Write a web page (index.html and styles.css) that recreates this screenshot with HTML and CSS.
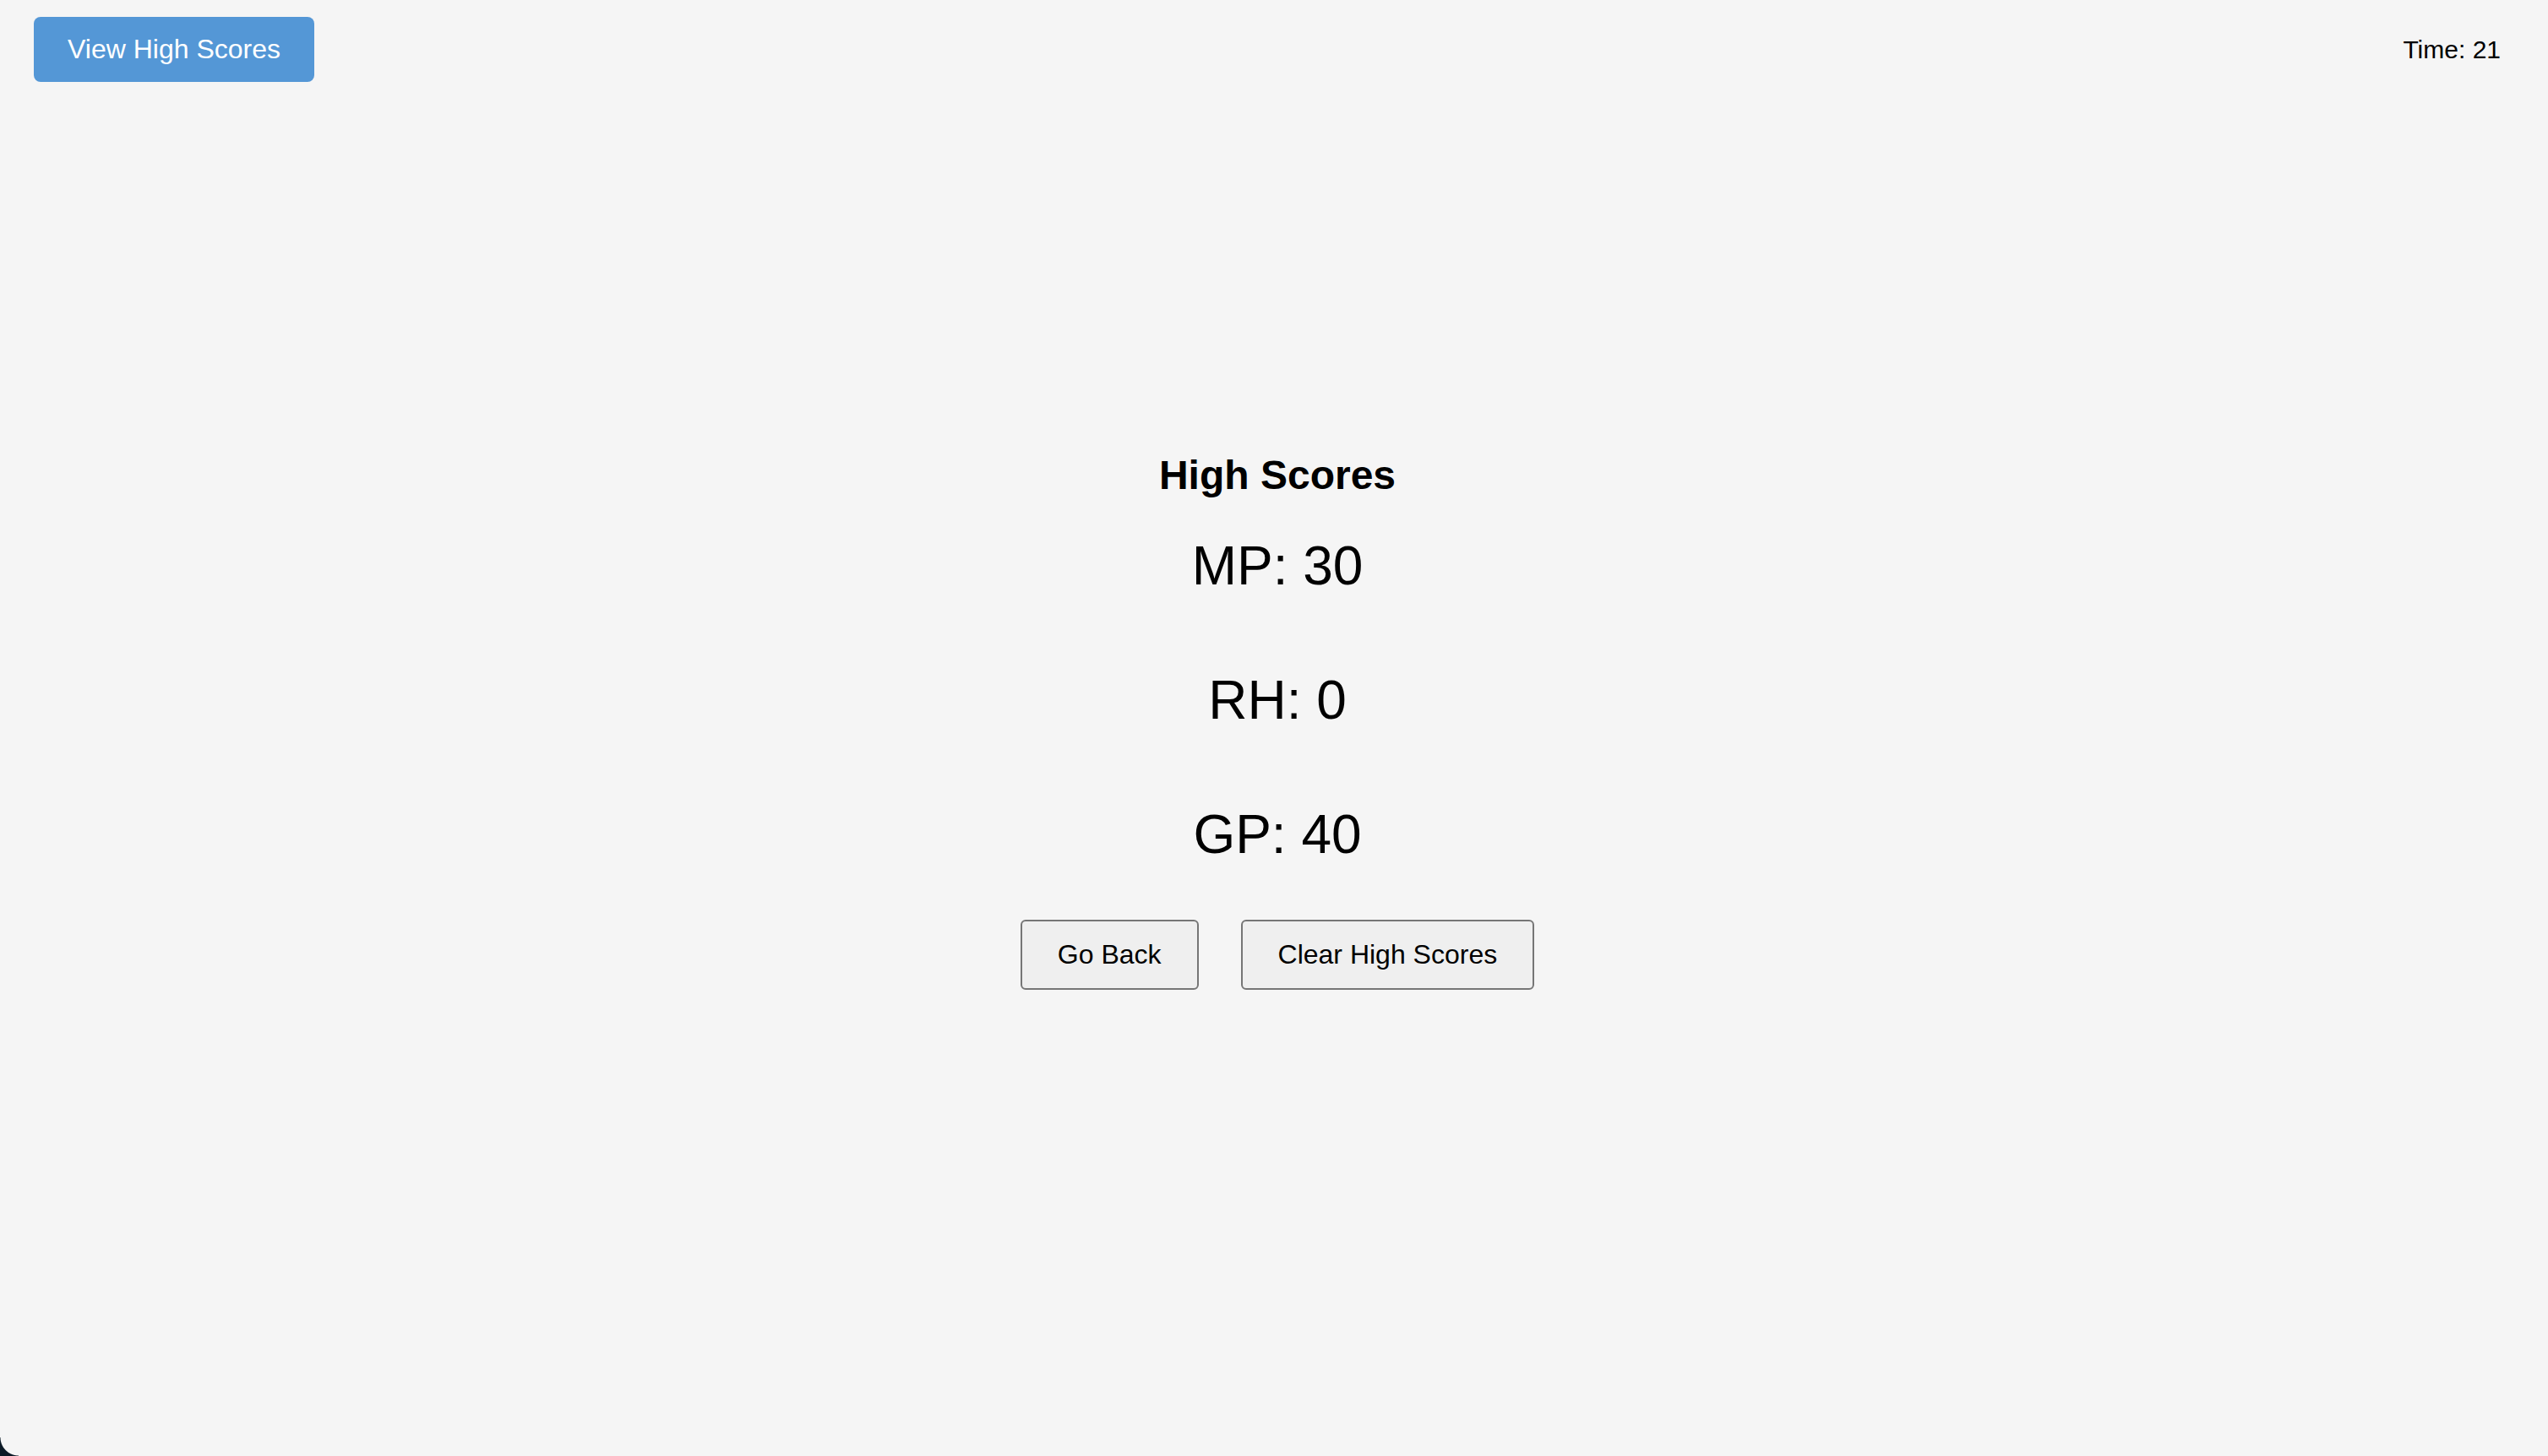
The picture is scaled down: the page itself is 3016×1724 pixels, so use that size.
FILE: index.html
```html
<!DOCTYPE html>
<html lang="en">
<head>
<meta charset="utf-8">
<title>High Scores</title>
<link rel="stylesheet" href="styles.css">
</head>
<body>
<header class="topbar">
  <button class="view-btn" type="button">View High Scores</button>
  <div class="timer">Time: 21</div>
</header>
<main class="scores">
  <h2 class="scores-title">High Scores</h2>
  <p class="score">MP: 30</p>
  <p class="score">RH: 0</p>
  <p class="score">GP: 40</p>
  <div class="actions">
    <button class="plain-btn" type="button">Go Back</button>
    <button class="plain-btn" type="button">Clear High Scores</button>
  </div>
</main>
<div class="corner"></div>
</body>
</html>
```

FILE: styles.css
```css
html, body {
  margin: 0;
  padding: 0;
}
body {
  background: #f5f5f5;
  font-family: "Liberation Sans", Arial, Helvetica, sans-serif;
  color: #000;
  width: 3016px;
  height: 1724px;
  overflow: hidden;
  position: relative;
}
.topbar {
  display: flex;
  justify-content: space-between;
  align-items: center;
  padding: 20px 56px 0 40px;
}
.view-btn {
  font-family: inherit;
  font-size: 32px;
  line-height: 37px;
  padding: 20px 40px;
  background: #5497d6;
  color: #fff;
  border: none;
  border-radius: 8px;
  width: 332px;
  height: 77px;
}
.timer {
  font-size: 30px;
  line-height: 35px;
}
.scores {
  display: flex;
  flex-direction: column;
  align-items: center;
  margin-top: 438px;
  padding-left: 8px;
}
.scores-title {
  margin: 0;
  font-size: 48px;
  line-height: 56px;
  font-weight: bold;
}
.score {
  margin: 42px 0 0;
  font-size: 64px;
  line-height: 74px;
}
.score + .score {
  margin-top: 85px;
}
.actions {
  display: flex;
  gap: 50px;
  margin-top: 64px;
}
.plain-btn {
  font-family: inherit;
  font-size: 32px;
  line-height: 39px;
  padding: 20px 42px;
  background: #efefef;
  color: #000;
  border: 2px solid #767676;
  border-radius: 6px;
  height: 83px;
}
.corner {
  position: absolute;
  left: 0;
  bottom: 0;
  width: 22px;
  height: 22px;
  background: radial-gradient(circle at 100% 0, transparent 21px, #0d1b27 22px);
}
```
